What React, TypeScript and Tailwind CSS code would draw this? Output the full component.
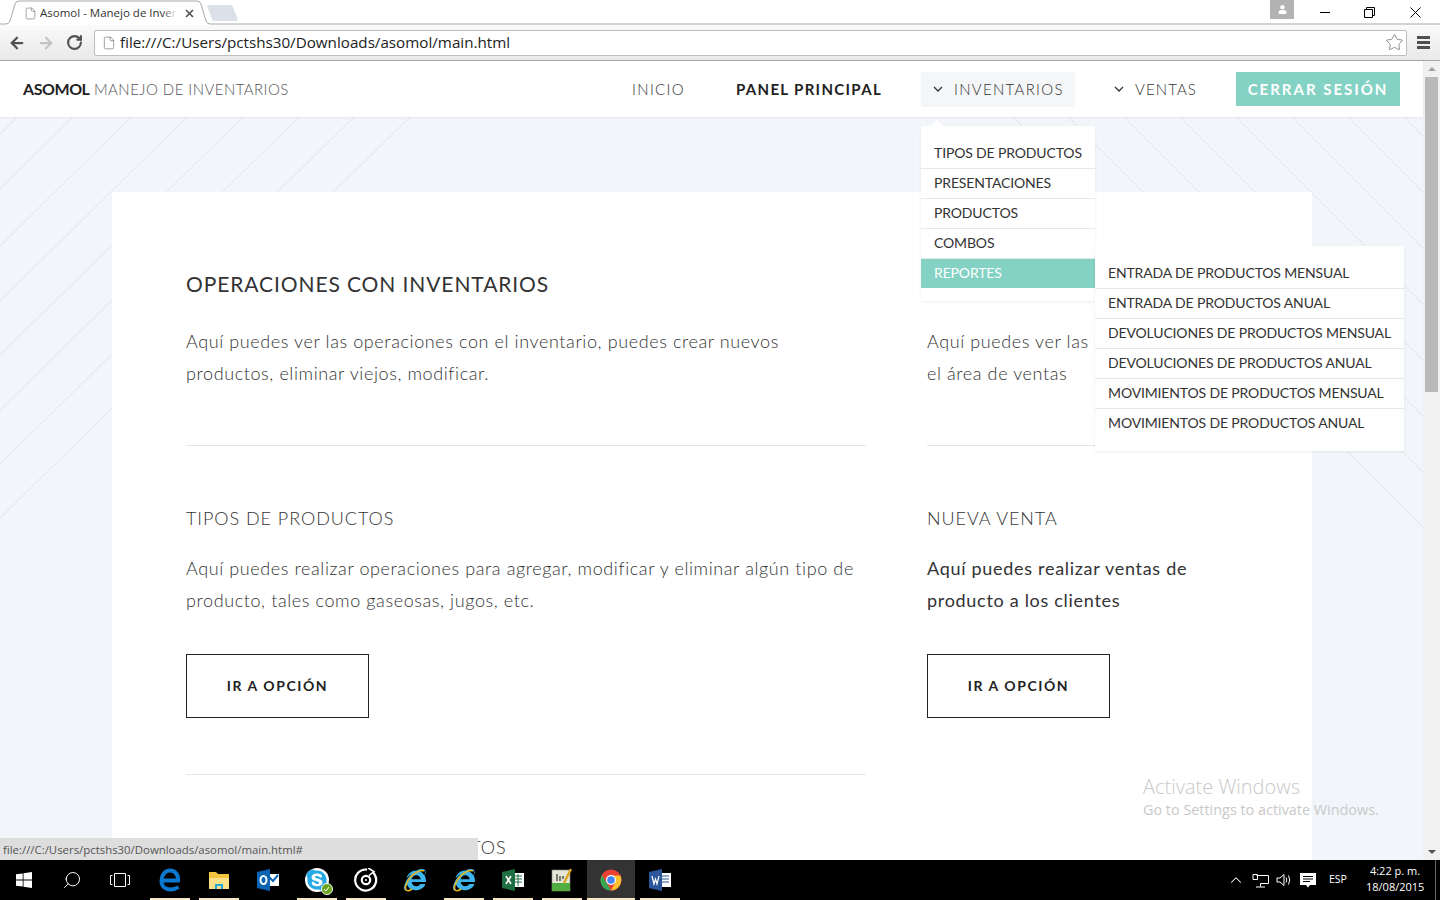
import { ArrowLeft, ArrowRight, RotateCw, Star, ChevronUp, Search, File } from "lucide-react";
import { FaInternetExplorer, FaSkype, FaUser } from "react-icons/fa";

const inventoryItems = ["TIPOS DE PRODUCTOS", "PRESENTACIONES", "PRODUCTOS", "COMBOS"];
const reportItems = [
  "ENTRADA DE PRODUCTOS MENSUAL",
  "ENTRADA DE PRODUCTOS ANUAL",
  "DEVOLUCIONES DE PRODUCTOS MENSUAL",
  "DEVOLUCIONES DE PRODUCTOS ANUAL",
  "MOVIMIENTOS DE PRODUCTOS MENSUAL",
  "MOVIMIENTOS DE PRODUCTOS ANUAL",
];

// where each stripe of the page background starts on the top edge
const leftStripes = [
  [17, 17],
  [73, 72],
  [131, 129],
  [187, 184],
  [243, 238],
  [299, 293],
  [354, 347],
  [410, 401],
];
const rightStripes = [1013, 1068, 1124, 1180, 1236, 1292, 1348, 1404];

function Stripes() {
  return (
    <svg className="absolute inset-0 w-full h-full" viewBox="0 0 1423 743" preserveAspectRatio="none">
      {leftStripes.map(([x, y]) => (
        <line key={x} x1={x} y1={0} x2={0} y2={y} stroke="#e0e3e9" strokeWidth="1" />
      ))}
      {rightStripes.map((x) => (
        <line key={x} x1={x} y1={0} x2={x + 480} y2={480} stroke="#e0e3e9" strokeWidth="1" />
      ))}
    </svg>
  );
}

function NavChevron() {
  return (
    <svg width="10" height="6" viewBox="0 0 10 6" fill="none" stroke="#333" strokeWidth="1.3" className="shrink-0">
      <path d="M1 1 L5 5 L9 1" />
    </svg>
  );
}

function BrowserTabs() {
  return (
    <div className="relative h-[25px] bg-white flex shrink-0">
      <svg className="absolute left-0 top-0 w-full h-[25px]" viewBox="0 0 1440 25" preserveAspectRatio="none">
        <path d="M0 24 H6 Q9 24 10 21 L15 4 Q16 1 19 1 H197 Q200 1 201 4 L206 21 Q207 24 210 24 H1440" fill="#fff" stroke="#a8a8a8" strokeWidth="1" />
        <path d="M207 6 Q207 5 209 5 H230 Q232 5 233 7 L238 20 Q238 21 236 21 H214 Q212 21 212 19 Z" fill="#dce1e9" />
      </svg>
      <div className="relative flex items-center h-[24px] pt-[2px] pl-[24px] w-[200px]">
        <File size={13} strokeWidth={1.2} className="text-[#777] shrink-0" />
        <div className="relative ml-[3px] w-[137px] overflow-hidden whitespace-nowrap font-['Open_Sans',sans-serif] text-[11.5px] text-[#333]">
          Asomol - Manejo de Inventarios
          <div className="absolute right-0 top-0 h-full w-[14px] bg-gradient-to-l from-white to-transparent" />
        </div>
        <svg width="9" height="9" viewBox="0 0 9 9" className="ml-[8px]">
          <path d="M1 1 L8 8 M8 1 L1 8" stroke="#555" strokeWidth="1.7" />
        </svg>
      </div>
      <div className="relative ml-auto flex items-start h-[24px]">
        <div className="w-[24px] h-[19px] bg-[#b3b3b3] flex items-center justify-center mr-[8px]">
          <FaUser size={9} className="text-white" />
        </div>
        <div className="w-[46px] h-[24px] flex items-center justify-center mr-[-1px]">
          <div className="w-[10px] h-px bg-black" />
        </div>
        <div className="w-[45px] h-[24px] flex items-center justify-center">
          <svg width="11" height="11" viewBox="0 0 11 11" fill="none" stroke="#000">
            <path d="M.5 2.5 H8.5 V10.5 H.5 Z M2.5 2.5 V.5 H10.5 V8.5 H8.5" />
          </svg>
        </div>
        <div className="w-[46px] h-[24px] flex items-center justify-center mr-[2px]">
          <svg width="11" height="11" viewBox="0 0 11 11" stroke="#000">
            <path d="M.5 .5 L10.5 10.5 M10.5 .5 L.5 10.5" />
          </svg>
        </div>
      </div>
    </div>
  );
}

function Toolbar() {
  return (
    <div className="h-[36px] flex items-center shrink-0 bg-gradient-to-b from-[#fafafa] to-[#e9e9e9] border-b border-[#a6a6a6]">
      <div className="w-[94px] flex items-center pl-[8px] gap-[11px]">
        <ArrowLeft size={18} strokeWidth={3} className="text-[#505050]" />
        <ArrowRight size={18} strokeWidth={3} className="text-[#c4c4c4]" />
        <RotateCw size={17} strokeWidth={3} className="text-[#505050]" />
      </div>
      <div className="w-[1313px] h-[26px] flex items-center bg-white border border-[#bdbdbd] rounded-[2px] pl-[7px] pr-[2px]">
        <File size={14} strokeWidth={1.2} className="text-[#777]" />
        <span className="ml-[4px] font-['Open_Sans',sans-serif] text-[15.2px] text-[#222]">file:///C:/Users/pctshs30/Downloads/asomol/main.html</span>
        <Star size={19} strokeWidth={1.2} className="ml-auto text-[#888]" />
      </div>
      <div className="flex-1 flex flex-col items-center gap-[2px]">
        <div className="w-[13px] h-[3px] bg-[#505050]" />
        <div className="w-[13px] h-[3px] bg-[#505050]" />
        <div className="w-[13px] h-[3px] bg-[#505050]" />
      </div>
    </div>
  );
}

function Nav() {
  return (
    <nav className="relative z-20 h-[56px] shrink-0 bg-white flex items-center pl-[23px] pr-[23px] shadow-[0_1px_2px_rgba(0,0,0,0.06)] font-['Lato',sans-serif]">
      <div className="text-[15px] text-[#555] font-light tracking-[0.45px]">
        <span className="font-bold text-[#222] text-[16px] tracking-[-0.45px]">ASOMOL</span> MANEJO DE INVENTARIOS
      </div>
      <div className="ml-auto flex items-center">
        <span className="text-[15px] font-light tracking-[1.3px] text-[#333]">INICIO</span>
        <span className="ml-[51px] text-[15px] font-bold tracking-[1.33px] text-[#222]">PANEL PRINCIPAL</span>
        <div className="relative ml-[39px] w-[154px] h-[35px] bg-[#f4f6f8] flex items-center pl-[12px]">
          <NavChevron />
          <span className="ml-[11px] text-[15px] font-light tracking-[1.3px] text-[#333]">INVENTARIOS</span>
          <Dropdown />
        </div>
        <div className="ml-[39px] flex items-center">
          <NavChevron />
          <span className="ml-[11px] text-[15px] font-light tracking-[1.1px] text-[#333]">VENTAS</span>
        </div>
        <button className="ml-[39px] w-[164px] h-[34px] bg-[#84d2c4] text-white text-[15px] font-bold tracking-[2px]">CERRAR SESIÓN</button>
      </div>
    </nav>
  );
}

function Dropdown() {
  return (
    <div className="absolute left-0 top-[54px] w-[174px] h-[175px] bg-white pt-[13px] shadow-[0_1px_3px_rgba(0,0,0,0.07)] text-[14px] tracking-[-0.15px] text-[#333]">
      <div className="absolute left-[10px] top-[-6px] w-0 h-0 border-x-[6px] border-x-transparent border-b-[6px] border-b-white" />
      {inventoryItems.map((item) => (
        <div key={item} className="h-[30px] flex items-center pl-[13px] pb-[2px] border-b border-[#e8e8e8]">
          {item}
        </div>
      ))}
      <div className="relative h-[29px] flex items-center pl-[13px] pb-[2px] bg-[#84d2c4] text-white">
        REPORTES
        <div className="absolute left-[174px] top-[-13px] w-[309px] h-[205px] bg-white pt-[13px] text-[#333] shadow-[0_1px_3px_rgba(0,0,0,0.07)]">
          {reportItems.map((item, i) => (
            <div key={item} className={`h-[30px] flex items-center pl-[13px] pb-[2px] border-b ${i < 5 ? "border-[#e8e8e8]" : "border-transparent"}`}>
              {item}
            </div>
          ))}
        </div>
      </div>
    </div>
  );
}

function Section({ title, text, strong, large, button, divider }: { title: string; text: React.ReactNode; strong?: boolean; large?: boolean; button?: boolean; divider?: boolean }) {
  return (
    <div>
      <h2 className={large ? "h-[30px] leading-[30px] text-[21px] tracking-[0.9px] text-[#333]" : "h-[30px] leading-[30px] text-[18px] font-light tracking-[0.95px] text-[#333]"}>{title}</h2>
      <p className={`${large ? "mt-[26px]" : "mt-[19px]"} text-[18px] leading-[32px] ${strong ? "tracking-[0.7px] text-[#333]" : "font-light tracking-[0.6px] text-[#333]"}`}>{text}</p>
      {button && (
        <button className="mt-[38px] block w-[183px] h-[64px] pb-[2px] border border-[#222] text-[14px] font-bold tracking-[1.56px] text-[#222]">IR A OPCIÓN</button>
      )}
      <div className={`mt-[56px] h-px ${divider ? "bg-[#e4e4e4]" : ""}`} />
    </div>
  );
}

function Page() {
  return (
    <main className="relative flex-1 overflow-hidden bg-[#f2f5fa]">
      <Stripes />
      <div className="relative mt-[75px] ml-[112px] w-[1200px] bg-white pt-[77px] pl-[74px] font-['Lato',sans-serif]">
        <div className="grid grid-cols-[680px_314px] gap-x-[61px] gap-y-[57px]">
          <Section
            large
            divider
            title="OPERACIONES CON INVENTARIOS"
            text="Aquí puedes ver las operaciones con el inventario, puedes crear nuevos productos, eliminar viejos, modificar."
          />
          <Section
            large
            divider
            title="OPERACIONES CON VENTAS"
            text={
              <>
                Aquí puedes ver las operaciones en
                <br />
                el área de ventas
              </>
            }
          />
          <Section
            button
            divider
            title="TIPOS DE PRODUCTOS"
            text="Aquí puedes realizar operaciones para agregar, modificar y eliminar algún tipo de producto, tales como gaseosas, jugos, etc."
          />
          <Section button strong title="NUEVA VENTA" text="Aquí puedes realizar ventas de producto a los clientes" />
          <h2 className="h-[30px] leading-[30px] text-[18px] font-light tracking-[1.03px] text-[#333]">PRESENTACIONES DE PRODUCTOS</h2>
        </div>
      </div>
    </main>
  );
}

function Scrollbar() {
  return (
    <div className="w-[17px] shrink-0 bg-[#f1f1f1] flex flex-col items-center">
      <div className="h-[16px] flex items-center justify-center">
        <div className="w-0 h-0 border-x-[4px] border-x-transparent border-b-[4px] border-b-[#a3a3a3]" />
      </div>
      <div className="w-[13px] h-[315px] bg-[#b9b9b9]" />
      <div className="mt-auto h-[16px] flex items-center justify-center">
        <div className="w-0 h-0 border-x-[4px] border-x-transparent border-t-[4px] border-t-[#505050]" />
      </div>
    </div>
  );
}

function WindowsLogo() {
  return (
    <svg width="16" height="16" viewBox="0 0 16 16" fill="#fff">
      <path d="M0 2.3 L6.7 1.4 V7.6 H0 Z M7.5 1.3 L16 0 V7.6 H7.5 Z M0 8.4 H6.7 V14.6 L0 13.7 Z M7.5 8.4 H16 V16 L7.5 14.7 Z" />
    </svg>
  );
}

function TaskViewIcon() {
  return (
    <svg width="20" height="16" viewBox="0 0 20 16" fill="none" stroke="#fff">
      <path d="M4.5 1.5 H15.5 V14.5 H4.5 Z M2.5 3.5 H.5 V12.5 H2.5 M17.5 3.5 H19.5 V12.5 H17.5" />
    </svg>
  );
}

function EdgeIcon() {
  return (
    <svg width="22" height="24" viewBox="0 0 22 24" fill="none" stroke="#0b78d0" strokeWidth="4">
      <path d="M3 12.5 H19 C19.5 6 15.5 2.5 11 2.5 C6 2.5 2.5 7 2.5 13 C2.5 18.5 6.5 21.5 11.5 21.5 C14.5 21.5 17 20.8 19.5 19" />
    </svg>
  );
}

function ExplorerIcon() {
  return (
    <svg width="22" height="22" viewBox="0 0 22 22">
      <path d="M1 3 H8 L10 5 H21 V20 H1 Z" fill="#f5c542" />
      <path d="M1 9 H21 V20 H1 Z" fill="#fbe08a" />
      <path d="M7 20 V15 H15 V20 H13 V17 H9 V20 Z" fill="#23a9d6" />
    </svg>
  );
}

function OutlookIcon() {
  return (
    <svg width="22" height="22" viewBox="0 0 22 22">
      <rect x="10" y="5" width="12" height="12" fill="#fff" />
      <path d="M12 8 L16 12 L21 6" stroke="#0a64b4" strokeWidth="2" fill="none" />
      <path d="M0 3 L13 0 V22 L0 19 Z" fill="#0a64b4" />
      <ellipse cx="6.5" cy="11" rx="3" ry="4" fill="none" stroke="#fff" strokeWidth="2" />
    </svg>
  );
}

function GrooveIcon() {
  return (
    <svg width="24" height="24" viewBox="0 0 24 24" fill="none" stroke="#fff">
      <path d="M19 4.5 A10.5 10.5 0 1 1 13 1.6" strokeWidth="2.2" />
      <path d="M14 0 L20 3.5 L15 7.5" strokeWidth="1.6" />
      <circle cx="12" cy="12" r="4.2" strokeWidth="2.2" />
      <circle cx="12" cy="12" r="1" fill="#fff" strokeWidth="0" />
    </svg>
  );
}

function IeIcon() {
  return (
    <div className="relative w-[24px] h-[24px] flex items-center justify-center">
      <FaInternetExplorer size={22} className="text-[#3db6ee]" />
      <svg width="24" height="24" viewBox="0 0 24 24" className="absolute inset-0" fill="none">
        <path d="M21 3 C17 1 7 6 3 17 C1 23 5 24 9 21" stroke="#e3b21b" strokeWidth="1.6" />
      </svg>
    </div>
  );
}

function ExcelIcon() {
  return (
    <svg width="22" height="22" viewBox="0 0 22 22">
      <rect x="11" y="4" width="11" height="14" fill="#fff" />
      <path d="M13 7 H20 M13 10 H20 M13 13 H20 M16 5 V17" stroke="#1f6e43" strokeWidth="1" />
      <path d="M0 3 L13 0 V22 L0 19 Z" fill="#1f6e43" />
      <path d="M4 7 L9 15 M9 7 L4 15" stroke="#fff" strokeWidth="1.6" />
    </svg>
  );
}

function NotesIcon() {
  return (
    <svg width="22" height="24" viewBox="0 0 22 24">
      <rect x="1" y="2" width="18" height="21" fill="#e6e6d8" stroke="#8a8a7a" strokeWidth=".6" />
      <rect x="1" y="15" width="18" height="8" fill="#4fae3f" />
      <path d="M6 6 V13 M9 8 V13 M12 8 V11" stroke="#333" strokeWidth="1.2" />
      <path d="M20 1 L13 15" stroke="#d9a520" strokeWidth="2.4" />
    </svg>
  );
}

function ChromeIcon() {
  return (
    <svg width="22" height="22" viewBox="0 0 22 22">
      <circle cx="11" cy="11" r="10.5" fill="#ea4335" />
      <path d="M1.7 6 L7 14.5 L11 21.5 A10.5 10.5 0 0 1 1.7 6 Z" fill="#34a853" />
      <path d="M11 6.5 H20.3 A10.5 10.5 0 0 1 11 21.5 L15 14 Z" fill="#fbc02d" />
      <circle cx="11" cy="11" r="5" fill="#fff" />
      <circle cx="11" cy="11" r="3.8" fill="#4285f4" />
    </svg>
  );
}

function WordIcon() {
  return (
    <svg width="22" height="22" viewBox="0 0 22 22">
      <rect x="10" y="4" width="12" height="14" fill="#fff" />
      <path d="M13 7 H20 M13 10 H20 M13 13 H20" stroke="#2b579a" strokeWidth="1" />
      <path d="M0 3 L13 0 V22 L0 19 Z" fill="#2b579a" />
      <path d="M3 7 L5 15 L6.5 10 L8 15 L10 7" stroke="#fff" strokeWidth="1.2" fill="none" />
    </svg>
  );
}

function SkypeIcon() {
  return (
    <div className="relative">
      <FaSkype size={24} className="text-[#27a9e6] bg-white rounded-full" />
      <div className="absolute right-[-4px] bottom-[-3px] w-[12px] h-[12px] rounded-full bg-[#6aa51e] border border-white flex items-center justify-center">
        <svg width="7" height="6" viewBox="0 0 7 6" fill="none" stroke="#fff">
          <path d="M1 3 L3 5 L6 1" />
        </svg>
      </div>
    </div>
  );
}

const pinned = [
  { key: "edge", icon: <EdgeIcon />, bar: true },
  { key: "explorer", icon: <ExplorerIcon />, bar: true },
  { key: "outlook", icon: <OutlookIcon />, bar: false },
  { key: "skype", icon: <SkypeIcon />, bar: true },
  { key: "groove", icon: <GrooveIcon />, bar: true },
  { key: "ie1", icon: <IeIcon />, bar: false },
  { key: "ie2", icon: <IeIcon />, bar: true },
  { key: "excel", icon: <ExcelIcon />, bar: true },
  { key: "notes", icon: <NotesIcon />, bar: true },
];

function Taskbar() {
  return (
    <footer className="h-[40px] shrink-0 bg-black flex items-stretch text-white font-['Open_Sans',sans-serif]">
      <div className="w-[48px] flex items-center justify-center"><WindowsLogo /></div>
      <div className="w-[48px] flex items-center justify-center"><Search size={20} strokeWidth={1.2} className="-scale-x-100" /></div>
      <div className="w-[48px] flex items-center justify-center"><TaskViewIcon /></div>
      <div className="w-px" />
      {pinned.map((p) => (
        <div key={p.key} className="w-[49px] flex items-center justify-center relative">
          {p.icon}
          {p.bar && <div className="absolute bottom-0 left-[5px] right-[4px] h-[2px] bg-[#f8e9c4]" />}
        </div>
      ))}
      <div className="ml-px w-[48px] bg-[#333] flex items-center justify-center relative">
        <ChromeIcon />
        <div className="absolute bottom-0 left-0 right-0 h-[2px] bg-[#f8e9c4]" />
      </div>
      <div className="w-[49px] flex items-center justify-center relative">
        <WordIcon />
        <div className="absolute bottom-0 left-[5px] right-[4px] h-[2px] bg-[#f8e9c4]" />
      </div>
      <div className="ml-auto flex items-center">
        <ChevronUp size={18} strokeWidth={1.4} />
        <svg width="17" height="15" viewBox="0 0 17 15" fill="none" stroke="#fff" className="ml-[7px]">
          <path d="M4.5 2.5 H16.5 V10.5 H8.5 M1 1.5 H5.5 V6.5 H1 Z M8.5 10.5 V13.5 M4 14 H13" />
        </svg>
        <svg width="16" height="14" viewBox="0 0 16 14" fill="none" stroke="#fff" className="ml-[7px]">
          <path d="M1 5 H4 L8 1.5 V12.5 L4 9 H1 Z M10 4.5 Q11.5 7 10 9.5 M12.5 2.5 Q15 7 12.5 11.5" />
        </svg>
        <svg width="16" height="16" viewBox="0 0 16 16" className="ml-[8px]">
          <path d="M0 1 H16 V13 H10 L8 15.5 L6 13 H0 Z" fill="#fff" />
          <path d="M3 4.5 H13 M3 7 H13 M3 9.5 H10" stroke="#000" strokeWidth="1" />
        </svg>
        <span className="ml-[13px] w-[19px] text-[10.5px]">ESP</span>
        <div className="ml-[18px] w-[58px] text-center text-[11px] leading-[16px] pb-[2px]">
          <div>4:22 p. m.</div>
          <div>18/08/2015</div>
        </div>
        <div className="ml-[11px] w-px h-full bg-[#666] mr-[4px]" />
      </div>
    </footer>
  );
}

export default function App() {
  return (
    <div className="relative w-[1440px] h-[900px] overflow-hidden flex flex-col">
      <BrowserTabs />
      <Toolbar />
      <div className="flex-1 flex min-h-0">
        <div className="flex-1 flex flex-col min-w-0">
          <Nav />
          <Page />
        </div>
        <Scrollbar />
      </div>
      <Taskbar />

      {/* status bubble + activation watermark sit on top of the page */}
      <div className="absolute left-0 bottom-[40px] w-[478px] h-[22px] bg-[#dedede] flex items-center pl-[3px] pt-[1px] font-['Open_Sans',sans-serif] text-[11.4px] text-[#555]">
        file:///C:/Users/pctshs30/Downloads/asomol/main.html#
      </div>
      <div className="absolute left-[1143px] top-[774px] font-['Open_Sans',sans-serif] text-[#c9c9c9]">
        <div className="text-[20px] leading-[26px] font-light">Activate Windows</div>
        <div className="text-[14.4px] leading-[20px]">Go to Settings to activate Windows.</div>
      </div>
    </div>
  );
}
